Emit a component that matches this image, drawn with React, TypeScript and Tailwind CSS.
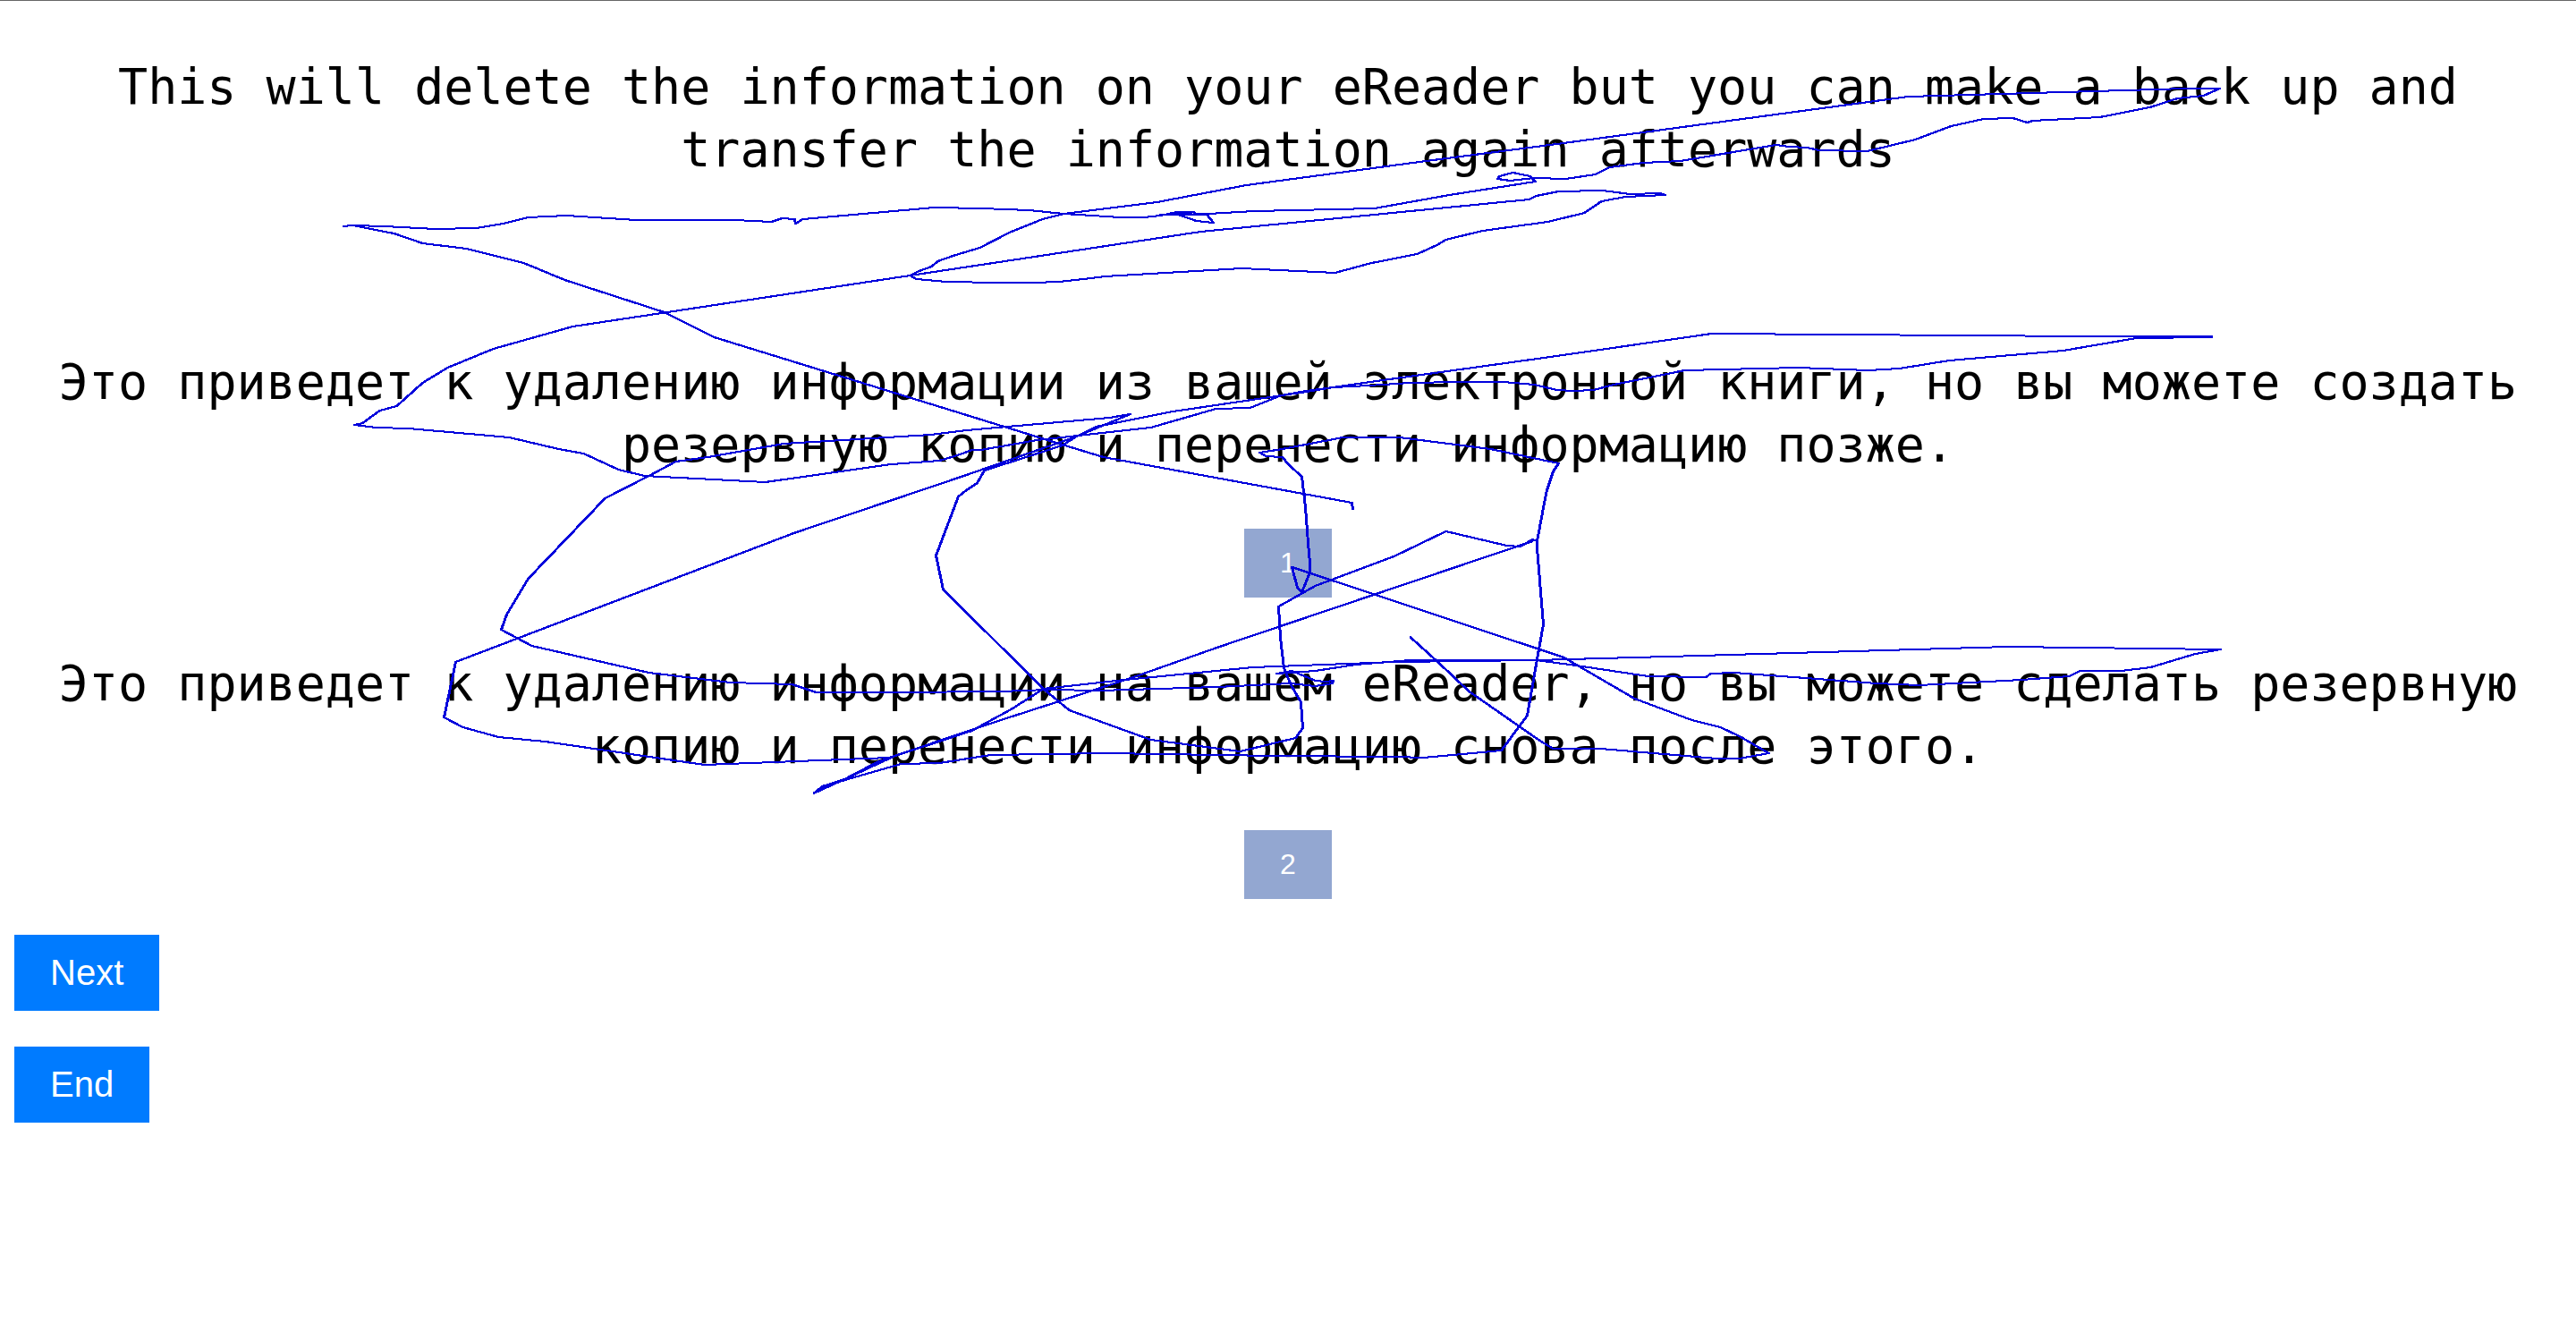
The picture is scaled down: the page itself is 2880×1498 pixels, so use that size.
const strokes: string[] = [
  "383,253 394,252 429,253 486,256 532,255 562,250 590,243 633,241 711,246 787,246 821,246 862,248 874,244 888,245 889,250 897,245 1044,232 1097,233 1150,235 1189,239 1252,243 1279,243 1297,241 1315,237 1334,237 1337,240 1297,240 1315,239 1349,240 1356,249 1337,247 1317,240 1351,239 1402,236 1536,233 1620,218 1716,203 1710,197 1691,193 1676,197 1674,200 1688,202 1715,199 1750,200 1783,195 1799,187 1837,182 1878,180 1985,162 2000,164 2020,165 2033,168 2087,169 2141,156 2181,141 2217,133 2250,132 2266,137 2272,135 2347,131 2403,120 2434,110 2463,107 2481,99 2444,99 2133,108 1740,161 1594,180 1393,207 1293,226 1189,239 1165,245 1128,260 1095,277 1065,286 1048,292 1041,298 1027,303 1017,308 1024,312 1058,315 1114,316 1155,316 1184,315 1211,312 1235,309 1388,300 1492,305 1533,294 1584,284 1606,274 1616,268 1657,258 1730,248 1771,238 1790,225 1817,220 1861,218 1856,216 1822,217 1791,213 1742,214 1717,219 1709,223 1342,259 1017,308 640,365 551,390 500,411 472,428 443,454 424,459 405,473 396,475 420,478 456,479 569,489 624,502 652,507 691,525 720,532 855,539 996,519 1050,515 1073,508 1086,503 1096,503 1159,492 1286,478 1359,457 1397,456 1432,442 1460,437 1490,433 1530,431 1576,428 1630,427 1680,427 1715,430 1740,436 1760,437 1781,436 1804,430 1883,414 2010,411 2088,414 2123,412 2179,403 2306,392 2388,378 2472,377 2472,376 2332,376 1913,373 1740,398 1560,423 1490,433 1460,438 1311,460 1240,474 1225,477 1203,488 1187,498 1100,526 1092,540 1080,548 1071,555 1046,621 1054,659 1166,770 1195,794 1286,827 1386,840 1448,825 1456,814 1454,785 1443,766 1435,747 1431,713 1429,678 1470,655 1558,622 1616,594 1684,610 1699,611 1713,603 1718,605",
  "383,253 394,252 440,261 472,272 521,278 585,294 631,313 742,349 798,377 1080,464 1187,497 1233,511 1511,562 1512,570",
  "1713,605 1360,724 1264,758 1100,811 1000,845 944,871 919,879 909,887",
  "909,887 919,880 944,872 1007,854 1050,853 1107,844 1236,842 1425,845 1560,846 1591,847 1678,839 1707,800 1718,737 1725,698 1718,613 1718,605 1724,573 1729,548 1736,527 1742,518 1666,502 1564,489 1501,489 1433,502 1408,506 1415,510 1433,511 1440,519 1455,533 1459,567 1462,607 1464,630 1464,640 1455,662 1450,657 1444,634 1748,735 1827,781 1891,805 1923,813 1944,823 1977,842 1944,848 1919,848 1789,837 1736,837 1721,828 1642,773 1607,740 1576,712",
  "909,887 944,871 980,852 994,847 1040,832 1086,817 1104,807 1130,793 1166,770 1257,760 1400,746 1560,740 1717,738 1900,733 2244,723 2323,724 2482,726 2454,731 2404,746 2371,750 2325,750 2313,756 2260,760 2145,766 2098,764 1938,752 1912,753 1907,757 1842,756 1762,744 1717,738 1576,738 1515,743 1470,750 1427,753 1444,750 1470,761 1482,762 1490,761 1489,764 1470,767 1442,764 1360,768 1229,772 1171,771 1118,773 1000,774 912,774 885,765 816,763 725,752 594,722 560,704 566,687 590,647 676,557 725,532 755,516 791,511 876,496 1040,486 1080,481 1240,467 1263,463 1203,488 1183,495 1100,524 1080,531 1000,558 887,596 509,740 496,802 517,813 557,824 609,829 787,855 994,847",
];

const translations = [
  {
    id: 1,
    text: "Это приведет к удалению информации из вашей электронной книги, но вы можете создать резервную копию и перенести информацию позже.",
  },
  {
    id: 2,
    text: "Это приведет к удалению информации на вашем eReader, но вы можете сделать резервную копию и перенести информацию снова после этого.",
  },
];

function Sentence({ children }: { children: string }) {
  return (
    <p className="text-center font-['DejaVu_Sans_Mono',monospace] text-[55px] leading-[70px] text-black">
      {children}
    </p>
  );
}

function ActionButton({ label }: { label: string }) {
  return (
    <button type="button" className="bg-[#007bff] px-10 py-5 text-[40px] leading-[45px] text-white">
      {label}
    </button>
  );
}

export default function App() {
  return (
    <main className="relative min-h-screen border-t border-[#666666] bg-white px-4 pt-[61px] pb-10 font-['Liberation_Sans',sans-serif]">
      <Sentence>
        This will delete the information on your eReader but you can make a back up and transfer the
        information again afterwards
      </Sentence>

      <div className="mt-[190px] flex flex-col gap-[61px]">
        {translations.map(({ id, text }) => (
          <section key={id} className="flex flex-col items-center gap-[59px]">
            <Sentence>{text}</Sentence>
            <button
              type="button"
              className="bg-[#93a7d1] px-10 py-5 text-[32px] leading-[37px] text-white"
            >
              {id}
            </button>
          </section>
        ))}
      </div>

      <div className="mt-10 flex flex-col items-start gap-10">
        <ActionButton label="Next" />
        <ActionButton label="End" />
      </div>

      {/* Gaze trail over the sentences; the second pass, one unit to the right, thickens steep runs like a square pen */}
      <svg
        aria-hidden="true"
        viewBox="0 1 2880 1497"
        className="pointer-events-none absolute inset-x-0 top-0 w-full"
        fill="none"
        stroke="#0000dc"
        strokeWidth="2"
        strokeLinejoin="round"
        shapeRendering="crispEdges"
      >
        {strokes.map((points) => (
          <g key={points}>
            <polyline points={points} />
            <polyline points={points} transform="translate(1 0)" />
          </g>
        ))}
      </svg>
    </main>
  );
}
